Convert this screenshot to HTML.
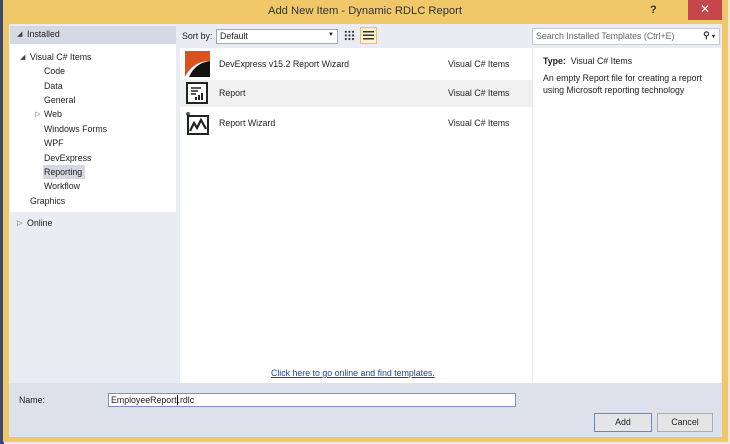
<!DOCTYPE html>
<html><head><meta charset="utf-8"><style>
*{margin:0;padding:0;box-sizing:border-box}
body{width:730px;height:444px;position:relative;overflow:hidden;background:#e8e8e8;font-family:"Liberation Sans",sans-serif;font-size:8.8px;color:#1e1e1e}
.a{position:absolute}
</style></head><body>
<div class="a" style="left:0;top:0;width:4px;height:444px;background:#3a4a6a"></div>
<div class="a" style="left:3px;top:0;width:725px;height:442px;background:#f0c869"></div>
<div class="a" style="left:0;width:730px;text-align:center;top:5px;font-size:11.2px;color:#333">Add New Item - Dynamic RDLC Report</div>
<div class="a" style="left:650px;top:4px;font-size:11px;font-weight:bold;color:#333">?</div>
<div class="a" style="left:688px;top:0;width:34px;height:20px;background:#c7464e;color:#fff;text-align:center;font-size:12px;line-height:19px">✕</div>
<div class="a" style="left:9px;top:24px;width:713px;height:413px;background:#e9ecf3"></div>
<div class="a" style="left:10px;top:26px;width:166px;height:18px;background:#d5d9e4"></div>
<div class="a" style="left:10px;top:44px;width:166px;height:168px;background:#fff"></div>
<div class="a" style="left:17px;top:30px;font-size:7px;color:#444">◢</div>
<div class="a" style="left:27px;top:29px">Installed</div>
<div class="a" style="left:20px;top:53px;font-size:7px;color:#444">◢</div>
<div class="a" style="left:30px;top:52px">Visual C# Items</div>
<div class="a" style="left:44px;top:66px">Code</div>
<div class="a" style="left:44px;top:81px">Data</div>
<div class="a" style="left:44px;top:95px">General</div>
<div class="a" style="left:35px;top:110px;font-size:7px;color:#666">▷</div>
<div class="a" style="left:44px;top:109px">Web</div>
<div class="a" style="left:44px;top:124px">Windows Forms</div>
<div class="a" style="left:44px;top:138px">WPF</div>
<div class="a" style="left:44px;top:153px">DevExpress</div>
<div class="a" style="left:43px;top:165px;width:42px;height:14px;background:#d5d8e2"></div>
<div class="a" style="left:44px;top:167px">Reporting</div>
<div class="a" style="left:44px;top:181px">Workflow</div>
<div class="a" style="left:30px;top:196px">Graphics</div>
<div class="a" style="left:17px;top:219px;font-size:7px;color:#666">▷</div>
<div class="a" style="left:27px;top:218px">Online</div>
<div class="a" style="left:182px;top:31px">Sort by:</div>
<div class="a" style="left:216px;top:29px;width:122px;height:15px;background:#fff;border:1px solid #a0a6b4;padding:1px 3px">Default<span style="position:absolute;right:3px;top:2px;font-size:6px">▼</span></div>
<div class="a" style="left:344px;top:30px;width:11px;height:11px;background:radial-gradient(circle,#333 1px,transparent 1.2px) 0 0/3.6px 3.6px"></div>
<div class="a" style="left:360px;top:27px;width:17px;height:17px;background:#fcf3c8;border:1px solid #e5c365"></div>
<div class="a" style="left:363px;top:31px;width:11px;height:9px;background:repeating-linear-gradient(#333 0 1.5px,transparent 1.5px 3.6px)"></div>
<div class="a" style="left:532px;top:28px;width:188px;height:17px;background:#fff;border:1px solid #c5cad6;padding:2px 3px;color:#666">Search Installed Templates (Ctrl+E)<span style="position:absolute;right:4px;top:1px;color:#333;font-weight:bold">⚲ <span style="font-size:6px">▾</span></span></div>
<div class="a" style="left:180px;top:48px;width:352px;height:335px;background:#fff"></div>
<div class="a" style="left:180px;top:80px;width:352px;height:27px;background:#f0f0f0"></div>
<svg class="a" style="left:185px;top:51px" width="25" height="26"><path d="M0 0H25V10Q8 10 0 26Z" fill="#d9531e"/><path d="M25 10V26H4Q10 12 25 10Z" fill="#111"/></svg>
<div class="a" style="left:219px;top:59px">DevExpress v15.2 Report Wizard</div>
<div class="a" style="left:448px;top:59px">Visual C# Items</div>
<svg class="a" style="left:186px;top:82px" width="22" height="22"><rect x="1" y="1" width="20" height="20" fill="#fff" stroke="#222" stroke-width="2"/><path d="M5 6h10M5 9h7M5 12h5" stroke="#222" stroke-width="1.5"/><rect x="9" y="15" width="2" height="3" fill="#222"/><rect x="12" y="13" width="2" height="5" fill="#222"/><rect x="15" y="11" width="2" height="7" fill="#222"/></svg>
<div class="a" style="left:219px;top:88px">Report</div>
<div class="a" style="left:448px;top:88px">Visual C# Items</div>
<svg class="a" style="left:185px;top:111px" width="24" height="24"><circle cx="3" cy="3" r="2" fill="#555"/><rect x="3" y="5" width="20" height="18" fill="#fff" stroke="#222" stroke-width="2"/><path d="M5 20L9 12L12 17L16 9L21 18" stroke="#222" stroke-width="2.2" fill="none"/></svg>
<div class="a" style="left:219px;top:118px">Report Wizard</div>
<div class="a" style="left:448px;top:118px">Visual C# Items</div>
<div class="a" style="left:271px;top:368px;color:#1a3fb4;text-decoration:underline">Click here to go online and find templates.</div>
<div class="a" style="left:533px;top:48px;width:188px;height:335px;background:#fff"></div>
<div class="a" style="left:543px;top:56px"><b>Type:</b>&nbsp; Visual C# Items</div>
<div class="a" style="left:543px;top:72px;line-height:12px;width:175px">An empty Report file for creating a report using Microsoft reporting technology</div>
<div class="a" style="left:9px;top:383px;width:713px;height:54px;background:#dde1eb"></div>
<div class="a" style="left:19px;top:395px">Name:</div>
<div class="a" style="left:108px;top:393px;width:408px;height:14px;background:#fff;border:1px solid #7d8fd0;padding:1px 2px">EmployeeReport<span style="border-left:1px solid #000">.rdlc</span></div>
<div class="a" style="left:594px;top:413px;width:58px;height:19px;background:#e5e5e5;border:1px solid #4d8fd8;text-align:center;line-height:17px">Add</div>
<div class="a" style="left:657px;top:413px;width:56px;height:19px;background:#e5e5e5;border:1px solid #acacac;text-align:center;line-height:17px">Cancel</div>
</body></html>
